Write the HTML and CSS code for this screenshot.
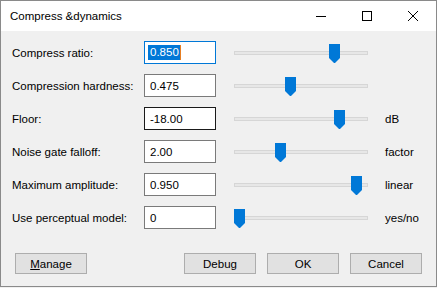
FILE: index.html
```html
<!DOCTYPE html>
<html>
<head>
<meta charset="utf-8">
<link rel="stylesheet" href="styles.css">
</head>
<body>
<div class="window">
  <div class="titlebar">
    <span class="title">Compress &amp;dynamics</span>
    <div class="caption-buttons">
      <span class="cap">
        <svg width="10" height="10" viewBox="0 0 10 10"><path d="M0 5.5H10" stroke="#000" stroke-width="1"/></svg>
      </span>
      <span class="cap">
        <svg width="10" height="10" viewBox="0 0 10 10"><rect x="0.5" y="0.5" width="9" height="9" fill="none" stroke="#000" stroke-width="1"/></svg>
      </span>
      <span class="cap">
        <svg width="10" height="10" viewBox="0 0 10 10"><path d="M0 0L10 10M10 0L0 10" stroke="#000" stroke-width="1"/></svg>
      </span>
    </div>
  </div>
  <div class="content">
    <div class="grid">
      <label class="lbl">Compress ratio:</label>
      <div class="field focused"><span class="sel">0.850</span><span class="caret"></span></div>
      <div class="slider"><div class="track"></div><div class="thumb" style="left:95px"><svg width="11" height="19" viewBox="0 0 11 19"><path d="M0 0H11V14L6 19H5L0 14Z" fill="#0078d7"/></svg></div></div>
      <span class="unit"></span>

      <label class="lbl">Compression hardness:</label>
      <div class="field">0.475</div>
      <div class="slider"><div class="track"></div><div class="thumb" style="left:51px"><svg width="11" height="19" viewBox="0 0 11 19"><path d="M0 0H11V14L6 19H5L0 14Z" fill="#0078d7"/></svg></div></div>
      <span class="unit"></span>

      <label class="lbl">Floor:</label>
      <div class="field hover">-18.00</div>
      <div class="slider"><div class="track"></div><div class="thumb" style="left:100px"><svg width="11" height="19" viewBox="0 0 11 19"><path d="M0 0H11V14L6 19H5L0 14Z" fill="#0078d7"/></svg></div></div>
      <span class="unit">dB</span>

      <label class="lbl">Noise gate falloff:</label>
      <div class="field">2.00</div>
      <div class="slider"><div class="track"></div><div class="thumb" style="left:41px"><svg width="11" height="19" viewBox="0 0 11 19"><path d="M0 0H11V14L6 19H5L0 14Z" fill="#0078d7"/></svg></div></div>
      <span class="unit">factor</span>

      <label class="lbl">Maximum amplitude:</label>
      <div class="field">0.950</div>
      <div class="slider"><div class="track"></div><div class="thumb" style="left:117px"><svg width="11" height="19" viewBox="0 0 11 19"><path d="M0 0H11V14L6 19H5L0 14Z" fill="#0078d7"/></svg></div></div>
      <span class="unit">linear</span>

      <label class="lbl">Use perceptual model:</label>
      <div class="field">0</div>
      <div class="slider"><div class="track"></div><div class="thumb" style="left:0px"><svg width="11" height="19" viewBox="0 0 11 19"><path d="M0 0H11V14L6 19H5L0 14Z" fill="#0078d7"/></svg></div></div>
      <span class="unit">yes/no</span>
    </div>
    <div class="buttons">
      <button class="btn"><u>M</u>anage</button>
      <div class="spacer"></div>
      <button class="btn">Debug</button>
      <button class="btn">OK</button>
      <button class="btn">Cancel</button>
    </div>
  </div>
</div>
</body>
</html>
```
FILE: styles.css
```css
html, body {
  margin: 0;
  padding: 0;
  background: #f0f0f0;
}
body {
  font-family: "Liberation Sans", Arial, sans-serif;
  font-size: 11.5px;
  color: #000;
}
.window {
  width: 437px;
  height: 287px;
  box-sizing: border-box;
  border: 1px solid #8a8a8a;
  background: #f0f0f0;
  display: flex;
  flex-direction: column;
}
.titlebar {
  height: 30px;
  background: #ffffff;
  display: flex;
  align-items: center;
  flex-shrink: 0;
}
.title {
  margin-left: 9px;
  font-size: 11.5px;
  margin-top: -1px;
}
.caption-buttons {
  margin-left: auto;
  display: flex;
  align-items: center;
}
.cap {
  width: 46px;
  height: 30px;
  display: flex;
  align-items: center;
  justify-content: center;
}
.cap svg { display: block; }
.content {
  padding: 10px 14px 0 11px;
  flex: 1;
  display: flex;
  flex-direction: column;
}
.grid {
  display: grid;
  grid-template-columns: 132px 72px 134px auto;
  grid-auto-rows: 23px;
  row-gap: 10px;
  align-items: center;
}
.lbl {
  display: block;
}
.field {
  box-sizing: border-box;
  height: 23px;
  width: 72px;
  background: #fff;
  border: 1px solid #7a7a7a;
  padding: 0 0 0 5px;
  display: flex;
  align-items: center;
}
.field.focused {
  border-color: #0078d7;
  padding-left: 3px;
}
.field.hover {
  border-color: #1a1a1a;
}
.sel {
  background: #0078d7;
  color: #fff;
  padding: 1px 1px 2px 2px;
}
.caret {
  width: 1px;
  height: 15px;
  background: #e67e22;
}
.slider {
  position: relative;
  height: 23px;
  margin-left: 18px;
  width: 134px;
  display: flex;
  align-items: center;
}
.track {
  box-sizing: border-box;
  width: 134px;
  height: 4px;
  background: #e7e7e7;
  border: 1px solid #d6d6d6;
  margin-top: 1px;
}
.thumb {
  position: absolute;
  top: 3px;
  width: 11px;
  height: 19px;
}
.thumb svg { display: block; }
.unit {
  margin-left: 35px;
  white-space: nowrap;
}
.grid .slider { margin-left: 18px; }
.grid { grid-template-columns: 132px 72px 152px auto; }
.grid .unit { margin-left: 17px; }
.buttons {
  display: flex;
  margin-top: 24px;
  padding-left: 3px;
  gap: 11px;
}
.spacer { flex: 1; }
.btn {
  box-sizing: border-box;
  width: 72px;
  height: 21px;
  background: #e1e1e1;
  border: 1px solid #adadad;
  font-family: "Liberation Sans", Arial, sans-serif;
  font-size: 11.5px;
  color: #000;
  padding: 0;
  margin: 0;
}
.btn u { text-decoration: underline; }
```
